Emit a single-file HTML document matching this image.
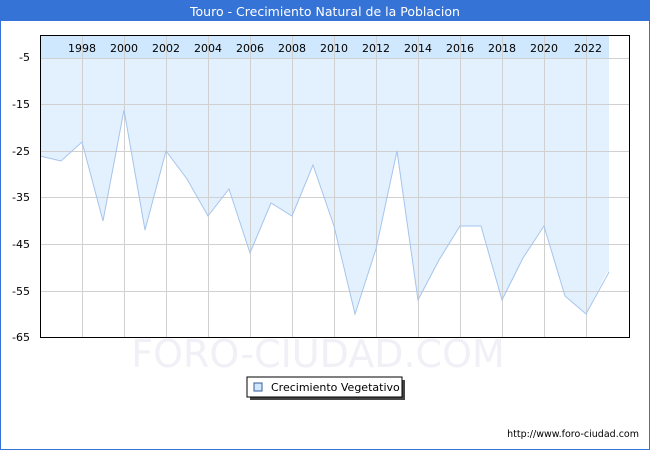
<!DOCTYPE html>
<html><head><style>body{margin:0}svg{display:block}</style></head><body>
<svg width="650" height="450" xmlns="http://www.w3.org/2000/svg" font-family="DejaVu Sans, Liberation Sans, sans-serif">
<rect x="0" y="0" width="650" height="450" fill="#3573d6"/>
<rect x="1" y="21" width="648" height="428" fill="#fff"/>
<text x="325" y="16" fill="#fff" font-size="12.5" text-anchor="middle">Touro - Crecimiento Natural de la Poblacion</text>
<rect x="40" y="35" width="590" height="303" fill="#fff"/>
<rect x="41" y="36" width="568" height="22" fill="#cfe8fd"/>
<polygon fill="#e3f1fe" points="40,58 40,156 61,161 82,142 103,221 124,110 145,230 166,151 187,179 208,216 229,189 250,253 271,203 292,216 313,165 334,226 355,314 376,249 397,151 418,300 439,260 460,226 481,226 502,300 523,258 544,226 565,296 586,314 607,272 609,272 609,58"/>
<g stroke="#d0d0d0" stroke-width="1">
<line x1="40" y1="58.5" x2="630" y2="58.5"/><line x1="40" y1="104.5" x2="630" y2="104.5"/><line x1="40" y1="151.5" x2="630" y2="151.5"/><line x1="40" y1="197.5" x2="630" y2="197.5"/><line x1="40" y1="244.5" x2="630" y2="244.5"/><line x1="40" y1="291.5" x2="630" y2="291.5"/>
<line x1="82.5" y1="35" x2="82.5" y2="338"/><line x1="124.5" y1="35" x2="124.5" y2="338"/><line x1="166.5" y1="35" x2="166.5" y2="338"/><line x1="208.5" y1="35" x2="208.5" y2="338"/><line x1="250.5" y1="35" x2="250.5" y2="338"/><line x1="292.5" y1="35" x2="292.5" y2="338"/><line x1="334.5" y1="35" x2="334.5" y2="338"/><line x1="376.5" y1="35" x2="376.5" y2="338"/><line x1="418.5" y1="35" x2="418.5" y2="338"/><line x1="460.5" y1="35" x2="460.5" y2="338"/><line x1="502.5" y1="35" x2="502.5" y2="338"/><line x1="544.5" y1="35" x2="544.5" y2="338"/><line x1="586.5" y1="35" x2="586.5" y2="338"/>
</g>
<polyline fill="none" stroke="#a6c4ec" stroke-width="1" points="40,156 61,161 82,142 103,221 124,110 145,230 166,151 187,179 208,216 229,189 250,253 271,203 292,216 313,165 334,226 355,314 376,249 397,151 418,300 439,260 460,226 481,226 502,300 523,258 544,226 565,296 586,314 609,272"/>
<rect x="40.5" y="35.5" width="589" height="302" fill="none" stroke="#000"/>
<g font-size="11" fill="#000" text-anchor="middle">
<text x="82" y="52">1998</text><text x="124" y="52">2000</text><text x="166" y="52">2002</text><text x="208" y="52">2004</text><text x="250" y="52">2006</text><text x="292" y="52">2008</text><text x="334" y="52">2010</text><text x="376" y="52">2012</text><text x="418" y="52">2014</text><text x="460" y="52">2016</text><text x="502" y="52">2018</text><text x="544" y="52">2020</text><text x="588" y="52">2022</text>
</g>
<g font-size="11" fill="#000" text-anchor="end">
<text x="30" y="61">-5</text><text x="30" y="108">-15</text><text x="30" y="155">-25</text><text x="30" y="201">-35</text><text x="30" y="248">-45</text><text x="30" y="295">-55</text><text x="30" y="341">-65</text>
</g>
<text x="318" y="367" font-size="38" fill="#f0f0f6" text-anchor="middle">FORO-CIUDAD.COM</text>
<rect x="250" y="380" width="155" height="20" fill="#444"/>
<rect x="247" y="377" width="155" height="20" fill="#fff" stroke="#000"/>
<rect x="254" y="383" width="8" height="8" fill="#cfe8fd" stroke="#3a5a9a"/>
<text x="271" y="391" font-size="11">Crecimiento Vegetativo</text>
<text x="639" y="437" font-size="9.5" text-anchor="end">http://www.foro-ciudad.com</text>
</svg>
</body></html>
